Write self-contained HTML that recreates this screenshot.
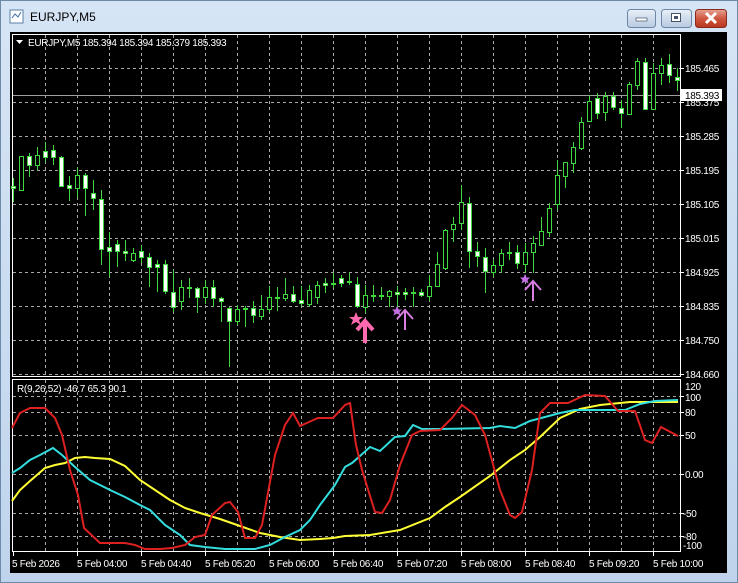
<!DOCTYPE html>
<html><head><meta charset="utf-8"><style>
html,body{margin:0;padding:0;width:738px;height:583px;overflow:hidden;background:#c9dcef}
svg{display:block}
text{font-family:"Liberation Sans",sans-serif;font-size:10px;letter-spacing:-0.3px;fill:#fff}
.w{fill:#fff;stroke:#3fd83f}
.b{fill:#000;stroke:#3fd83f}
</style></head><body>
<svg width="738" height="583" viewBox="0 0 738 583" xmlns="http://www.w3.org/2000/svg">
<defs>
<linearGradient id="fr" x1="0" y1="0" x2="0" y2="1"><stop offset="0" stop-color="#d6e5f5"/><stop offset="1" stop-color="#bfd4ec"/></linearGradient>
<linearGradient id="cb" x1="0" y1="0" x2="0" y2="1"><stop offset="0" stop-color="#e8a293"/><stop offset="0.5" stop-color="#cf5840"/><stop offset="1" stop-color="#b8361f"/></linearGradient>
<linearGradient id="nb" x1="0" y1="0" x2="0" y2="1"><stop offset="0" stop-color="#e9f0f8"/><stop offset="0.5" stop-color="#cfdcec"/><stop offset="1" stop-color="#b9cbe0"/></linearGradient>
</defs>
<rect x="0" y="0" width="738" height="583" fill="url(#fr)"/>
<rect x="0.5" y="0.5" width="737" height="582" fill="none" stroke="#6f8aa8"/>
<rect x="10" y="10" width="13" height="13" fill="#fff" stroke="#5a7ea6"/>
<path d="M12 18l3-4 3 3 3-5" stroke="#3a6ea5" fill="none"/>
<text x="30" y="21" style="font-size:12px;letter-spacing:0;fill:#000">EURJPY,M5</text>
<rect x="627.5" y="9.5" width="28" height="18" rx="3" fill="url(#nb)" stroke="#6e87a6"/>
<rect x="636" y="18" width="11" height="3" fill="#fff" stroke="#44556b" stroke-width="0.7"/>
<rect x="661.5" y="9.5" width="30" height="18" rx="3" fill="url(#nb)" stroke="#6e87a6"/>
<rect x="671.5" y="13.5" width="9" height="8" fill="#fff" stroke="#44556b"/>
<rect x="674" y="16" width="4" height="3" fill="#44556b"/>
<rect x="695.5" y="9.5" width="31" height="18" rx="3" fill="url(#cb)" stroke="#8a2a1c"/>
<path d="M706 13l10 10M716 13l-10 10" stroke="#fff" stroke-width="3"/>
<rect x="10" y="32" width="717" height="541" fill="#000"/>
<rect x="12.5" y="34.5" width="668" height="342" fill="none" stroke="#fff"/>
<rect x="12.5" y="379.5" width="668" height="172" fill="none" stroke="#fff"/>
<g stroke="#a8a8a8" stroke-dasharray="3,3" stroke-width="1">
<path d="M13 68.5H680M13 102.5H680M13 136.5H680M13 170.5H680M13 204.5H680M13 238.5H680M13 272.5H680M13 306.5H680M13 340.5H680M13 374.5H680"/>
<path d="M45.5 35V376M77.5 35V376M109.5 35V376M141.5 35V376M173.5 35V376M205.5 35V376M237.5 35V376M269.5 35V376M301.5 35V376M333.5 35V376M365.5 35V376M397.5 35V376M429.5 35V376M461.5 35V376M493.5 35V376M525.5 35V376M557.5 35V376M589.5 35V376M621.5 35V376M653.5 35V376"/>
<path d="M13 396.5H680M13 412.5H680M13 435.5H680M13 474.5H680M13 513.5H680M13 536.5H680"/>
<path d="M45.5 380V551M77.5 380V551M109.5 380V551M141.5 380V551M173.5 380V551M205.5 380V551M237.5 380V551M269.5 380V551M301.5 380V551M333.5 380V551M365.5 380V551M397.5 380V551M429.5 380V551M461.5 380V551M493.5 380V551M525.5 380V551M557.5 380V551M589.5 380V551M621.5 380V551M653.5 380V551"/>
</g>
<path d="M13 95.5H680" stroke="#a0a0a0"/>
<path stroke="#3fd83f" fill="none" d="M13.5 178V202M21.5 156V190M29.5 153V177M37.5 147V170M45.5 142V162M53.5 145V165M61.5 156V187M69.5 176V201M77.5 167V198M85.5 173V216M93.5 180V210M101.5 190V265M109.5 232V277M117.5 240V267M125.5 240V261M133.5 248V262M141.5 245V263M149.5 253V287M157.5 260V292M165.5 260V294M173.5 270V312M181.5 280V310M189.5 278V298M197.5 287V313M205.5 280V304M213.5 280V307M221.5 297V322M229.5 307V367M237.5 305V325M245.5 306V327M253.5 301V323M261.5 295V320M269.5 286V312M277.5 287V311M285.5 278V301M293.5 286V303M301.5 286V306M309.5 285V307M317.5 281V304M325.5 278V293M333.5 273V288M341.5 275V287M349.5 273V285M357.5 277V308M365.5 285V313M373.5 285V302M381.5 287V300M389.5 290V307M397.5 286V307M405.5 288V300M413.5 287V307M421.5 289V297M429.5 275V301M437.5 252V287M445.5 229V270M453.5 217V242M461.5 185V230M469.5 197V268M477.5 242V267M485.5 248V293M493.5 260V277M501.5 249V273M509.5 242V260M517.5 245V269M525.5 243V273M533.5 236V273M541.5 217V246M549.5 203V237M557.5 160V210M565.5 162V188M573.5 142V173M581.5 117V150M589.5 95V122M597.5 93V119M605.5 92V121M613.5 92V110M621.5 100V128M629.5 82V115M637.5 58V90M645.5 58V110M653.5 63V110M661.5 58V85M669.5 54V83M677.5 68V91"/>
<g>
<rect class="w" x="11.5" y="186.5" width="4" height="2"/>
<rect class="b" x="19.5" y="156.5" width="4" height="34"/>
<rect class="w" x="27.5" y="156.5" width="4" height="9"/>
<rect class="b" x="35.5" y="155.5" width="4" height="10"/>
<rect class="w" x="43.5" y="151.5" width="4" height="6"/>
<rect class="w" x="51.5" y="150.5" width="4" height="7"/>
<rect class="w" x="59.5" y="157.5" width="4" height="29"/>
<rect class="w" x="67.5" y="185.5" width="4" height="3"/>
<rect class="b" x="75.5" y="175.5" width="4" height="13"/>
<rect class="w" x="83.5" y="175.5" width="4" height="13"/>
<rect class="w" x="91.5" y="193.5" width="4" height="5"/>
<rect class="w" x="99.5" y="199.5" width="4" height="50"/>
<rect class="w" x="107.5" y="247.5" width="4" height="4"/>
<rect class="w" x="115.5" y="244.5" width="4" height="7"/>
<rect class="w" x="123.5" y="251.5" width="4" height="2"/>
<rect class="b" x="131.5" y="253.5" width="4" height="7"/>
<rect class="w" x="139.5" y="251.5" width="4" height="6"/>
<rect class="w" x="147.5" y="257.5" width="4" height="10"/>
<rect class="w" x="155.5" y="264.5" width="4" height="3"/>
<rect class="w" x="163.5" y="264.5" width="4" height="27"/>
<rect class="w" x="171.5" y="292.5" width="4" height="15"/>
<rect class="b" x="179.5" y="287.5" width="4" height="14"/>
<rect class="w" x="187.5" y="287.5" width="4" height="1"/>
<rect class="w" x="195.5" y="288.5" width="4" height="9"/>
<rect class="b" x="203.5" y="287.5" width="4" height="10"/>
<rect class="w" x="211.5" y="287.5" width="4" height="11"/>
<rect class="w" x="219.5" y="298.5" width="4" height="3"/>
<rect class="w" x="227.5" y="308.5" width="4" height="13"/>
<rect class="b" x="235.5" y="309.5" width="4" height="12"/>
<rect class="w" x="243.5" y="308.5" width="4" height="1"/>
<rect class="w" x="251.5" y="308.5" width="4" height="7"/>
<rect class="b" x="259.5" y="309.5" width="4" height="7"/>
<rect class="b" x="267.5" y="297.5" width="4" height="12"/>
<rect class="w" x="275.5" y="297.5" width="4" height="1"/>
<rect class="b" x="283.5" y="294.5" width="4" height="4"/>
<rect class="w" x="291.5" y="294.5" width="4" height="7"/>
<rect class="w" x="299.5" y="300.5" width="4" height="3"/>
<rect class="b" x="307.5" y="290.5" width="4" height="14"/>
<rect class="b" x="315.5" y="285.5" width="4" height="12"/>
<rect class="w" x="323.5" y="283.5" width="4" height="2"/>
<rect class="w" x="331.5" y="283.5" width="4" height="1"/>
<rect class="w" x="339.5" y="278.5" width="4" height="5"/>
<rect class="w" x="347.5" y="281.5" width="4" height="1"/>
<rect class="w" x="355.5" y="284.5" width="4" height="22"/>
<rect class="b" x="363.5" y="295.5" width="4" height="12"/>
<rect class="w" x="371.5" y="295.5" width="4" height="1"/>
<rect class="w" x="379.5" y="295.5" width="4" height="1"/>
<rect class="b" x="387.5" y="291.5" width="4" height="5"/>
<rect class="w" x="395.5" y="292.5" width="4" height="2"/>
<rect class="w" x="403.5" y="292.5" width="4" height="2"/>
<rect class="w" x="411.5" y="292.5" width="4" height="1"/>
<rect class="w" x="419.5" y="292.5" width="4" height="3"/>
<rect class="b" x="427.5" y="286.5" width="4" height="10"/>
<rect class="b" x="435.5" y="264.5" width="4" height="22"/>
<rect class="b" x="443.5" y="230.5" width="4" height="38"/>
<rect class="b" x="451.5" y="224.5" width="4" height="5"/>
<rect class="b" x="459.5" y="202.5" width="4" height="21"/>
<rect class="w" x="467.5" y="203.5" width="4" height="48"/>
<rect class="w" x="475.5" y="251.5" width="4" height="5"/>
<rect class="w" x="483.5" y="257.5" width="4" height="14"/>
<rect class="b" x="491.5" y="265.5" width="4" height="7"/>
<rect class="b" x="499.5" y="253.5" width="4" height="12"/>
<rect class="w" x="507.5" y="252.5" width="4" height="1"/>
<rect class="w" x="515.5" y="252.5" width="4" height="11"/>
<rect class="b" x="523.5" y="252.5" width="4" height="12"/>
<rect class="b" x="531.5" y="243.5" width="4" height="9"/>
<rect class="b" x="539.5" y="231.5" width="4" height="14"/>
<rect class="b" x="547.5" y="208.5" width="4" height="24"/>
<rect class="b" x="555.5" y="175.5" width="4" height="29"/>
<rect class="b" x="563.5" y="162.5" width="4" height="14"/>
<rect class="b" x="571.5" y="147.5" width="4" height="16"/>
<rect class="b" x="579.5" y="122.5" width="4" height="26"/>
<rect class="b" x="587.5" y="101.5" width="4" height="20"/>
<rect class="w" x="595.5" y="98.5" width="4" height="15"/>
<rect class="b" x="603.5" y="96.5" width="4" height="16"/>
<rect class="w" x="611.5" y="96.5" width="4" height="11"/>
<rect class="w" x="619.5" y="108.5" width="4" height="5"/>
<rect class="b" x="627.5" y="84.5" width="4" height="30"/>
<rect class="b" x="635.5" y="61.5" width="4" height="24"/>
<rect class="w" x="643.5" y="62.5" width="4" height="47"/>
<rect class="b" x="651.5" y="73.5" width="4" height="36"/>
<rect class="b" x="659.5" y="65.5" width="4" height="8"/>
<rect class="w" x="667.5" y="64.5" width="4" height="11"/>
<rect class="w" x="675.5" y="77.5" width="4" height="3"/>
</g>
<polygon points="356,312 358,317 363,317 359,320 361,325 356,322 351,325 353,320 349,317 354,317" fill="#ff6aae"/>
<path d="M365 321V343M357 330L365 321L373 330" stroke="#ff6aae" stroke-width="4" fill="none"/>
<polygon points="397,306 398.5,309.5 402,309.5 399.5,312 400.5,315.5 397,313.5 393.5,315.5 394.5,312 392,309.5 395.5,309.5" fill="#c56ee6"/>
<path d="M405 310V330M397 319L405 310L413 319" stroke="#d77ee0" stroke-width="2" fill="none"/>
<polygon points="525,274 526.5,277.5 530,277.5 527.5,280 528.5,283.5 525,281.5 521.5,283.5 522.5,280 520,277.5 523.5,277.5" fill="#c56ee6"/>
<path d="M533 281V301M525 290L533 281L541 290" stroke="#d77ee0" stroke-width="2" fill="none"/>
<path d="M16 40h7l-3.5 4z" fill="#fff"/>
<text x="28" y="46">EURJPY,M5  185.394 185.394 185.379 185.393</text>
<text x="17" y="392">R(9,26,52) -46.7 65.3 90.1</text>
<g>
<text x="685" y="72">185.465</text>
<text x="685" y="106">185.375</text>
<text x="685" y="140">185.285</text>
<text x="685" y="174">185.195</text>
<text x="685" y="208">185.105</text>
<text x="685" y="242">185.015</text>
<text x="685" y="276">184.925</text>
<text x="685" y="310">184.835</text>
<text x="685" y="344">184.750</text>
<text x="685" y="378">184.660</text>
</g>
<rect x="681" y="89" width="41" height="12" fill="#fff"/>
<text x="685" y="99" style="fill:#000">185.393</text>
<g>
<text x="685" y="390">120</text>
<text x="685" y="401">100</text>
<text x="685" y="416">80</text>
<text x="685" y="439">50</text>
<text x="685" y="478">0.00</text>
<text x="683" y="517">-50</text>
<text x="683" y="540">-80</text>
<text x="683" y="549">-100</text>
</g>
<path d="M681 68.5h3M681 102.5h3M681 136.5h3M681 170.5h3M681 204.5h3M681 238.5h3M681 272.5h3M681 306.5h3M681 340.5h3M681 374.5h3M681 396.5h3M681 412.5h3M681 435.5h3M681 474.5h3M681 513.5h3M681 536.5h3" stroke="#fff"/>
<polyline fill="none" stroke="#ffff33" stroke-width="2" points="12,501 20,490 30,481 45,468 55,465 65,463 75,458 85,457 95,458 110,459 125,466 140,480 155,490 170,500 185,508 200,513 220,519 240,526 260,533 280,537 300,540 320,539 333,538 345,536 370,535 400,530 430,518 445,507 460,497 490,476 510,460 525,450 540,437 560,418 580,409 600,405 630,402 660,402 678,402"/>
<polyline fill="none" stroke="#33dddd" stroke-width="2" points="12,473 20,468 30,460 40,455 53,448 62,455 75,467 90,480 110,490 125,497 140,505 150,510 165,525 180,535 190,545 205,547 225,549 255,549 270,545 285,537 300,530 310,520 320,505 335,485 345,467 352,463 360,456 370,447 380,451 395,437 405,436 413,425 422,429 440,429 490,428 500,426 515,428 530,421 545,417 560,413 575,410 610,410 625,410 640,404 655,401 678,400"/>
<polyline fill="none" stroke="#dd2020" stroke-width="2" points="12,428 20,413 30,408 45,408 55,418 62,435 70,470 78,495 84,528 100,543 125,543 135,545 145,549 160,549 172,548 185,545 195,537 205,535 212,515 225,503 230,502 238,512 245,538 255,538 262,525 275,455 285,425 293,413 300,426 318,418 333,418 345,405 350,403 356,445 362,470 375,512 382,513 390,500 400,465 412,435 420,431 440,430 452,418 462,405 475,415 485,435 500,490 510,515 515,518 522,512 532,470 540,413 550,403 568,403 585,395 605,396 618,411 635,411 645,440 652,443 661,427 678,436"/>
<path d="M13.5 552v4M77.5 552v4M141.5 552v4M205.5 552v4M269.5 552v4M333.5 552v4M397.5 552v4M461.5 552v4M525.5 552v4M589.5 552v4M653.5 552v4" stroke="#fff"/>
<g>
<text x="12" y="567">5 Feb 2026</text>
<text x="77" y="567">5 Feb 04:00</text>
<text x="141" y="567">5 Feb 04:40</text>
<text x="205" y="567">5 Feb 05:20</text>
<text x="269" y="567">5 Feb 06:00</text>
<text x="333" y="567">5 Feb 06:40</text>
<text x="397" y="567">5 Feb 07:20</text>
<text x="461" y="567">5 Feb 08:00</text>
<text x="525" y="567">5 Feb 08:40</text>
<text x="589" y="567">5 Feb 09:20</text>
<text x="653" y="567">5 Feb 10:00</text>
</g>
</svg>
</body></html>
